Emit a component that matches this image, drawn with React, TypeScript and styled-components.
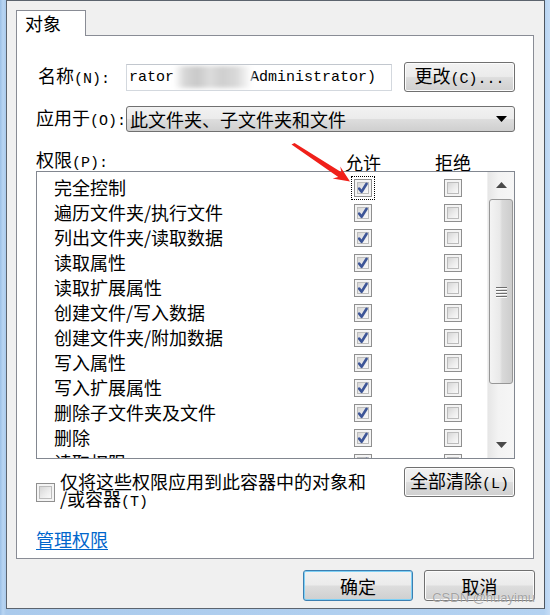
import styled, { createGlobalStyle } from "styled-components";

const GlobalStyle = createGlobalStyle`
  html, body {
    margin: 0;
    padding: 0;
  }
  body {
    background: #b0cfee;
    font-family: "Noto Sans CJK SC", sans-serif;
    color: #000;
  }
`;

const Screen = styled.div`
  position: relative;
  width: 550px;
  height: 615px;
  overflow: hidden;
  box-sizing: border-box;
  padding: 0 5px 0 6px;
  background: linear-gradient(90deg, #9cc0e6 0, #b9d5f2 3px, #aacaec 6px, #b4d2f1 544px, #c6ddf6 550px);
`;

const Window = styled.div`
  box-sizing: border-box;
  height: 609px;
  border: 1px solid #5c646e;
  border-right-color: #4e5660;
  background: #f0f0f0;
  padding: 9px 10px 0 9px;
  display: flex;
  flex-direction: column;
`;

const TabStrip = styled.div`
  display: flex;
  height: 25px;
`;

const Tab = styled.div`
  position: relative;
  z-index: 1;
  box-sizing: border-box;
  width: 70px;
  height: 26px;
  border: 1px solid #898c95;
  border-bottom: none;
  background: #fff;
  padding-left: 8px;
  font-size: 18px;
  line-height: 24px;
`;

const Panel = styled.div`
  box-sizing: border-box;
  height: 524px;
  border: 1px solid #898c95;
  background: #fff;
  padding: 0 18px 0 19px;
  display: flex;
  flex-direction: column;
  font-size: 18px;
`;

const Half = styled.span`
  font-family: "Liberation Mono", monospace;
  font-size: 15px;
`;

const FieldRow = styled.div<{ $top: number; $height: number }>`
  display: flex;
  align-items: center;
  margin-top: ${({ $top }) => $top}px;
  height: ${({ $height }) => $height}px;
`;

const Label = styled.div<{ $width: number; $indent?: number }>`
  flex: 0 0 auto;
  box-sizing: border-box;
  width: ${({ $width }) => $width}px;
  padding-left: ${({ $indent }) => $indent ?? 0}px;
  white-space: nowrap;
  line-height: 20px;
`;

const TextBox = styled.div`
  box-sizing: border-box;
  width: 266px;
  height: 27px;
  margin-right: 12px;
  border: 1px solid #d3d8de;
  border-top-color: #c2c7ce;
  padding-left: 2px;
  display: flex;
  align-items: center;
  white-space: nowrap;
  overflow: hidden;
  font-family: "Liberation Mono", monospace;
  font-size: 15px;
`;

const Blur = styled.span`
  display: inline-block;
  width: 78px;
  height: 22px;
  margin: 0 -2px 0 0;
  background: linear-gradient(90deg, #fff 0, #d6d6d6 14%, #c9c9c9 30%, #dcdcdc 46%, #cfcfcf 62%, #d9d9d9 80%, #fff 100%);
  filter: blur(2px);
`;

const WinButton = styled.button<{ $width: number; $height: number; $default?: boolean }>`
  box-sizing: border-box;
  width: ${({ $width }) => $width}px;
  height: ${({ $height }) => $height}px;
  padding: 0;
  border: 1px solid ${({ $default }) => ($default ? "#3c7fb1" : "#707070")};
  border-radius: 3px;
  background: linear-gradient(#f2f2f2 0%, #ebebeb 48%, #dddddd 52%, #cfcfcf 100%);
  box-shadow: inset 0 0 0 1px ${({ $default }) => ($default ? "#7fd0f5" : "#fcfcfc")};
  font-family: "Noto Sans CJK SC", sans-serif;
  font-size: 18px;
  line-height: 20px;
  color: #000;
  white-space: nowrap;
`;

const Combo = styled.div`
  flex: 1;
  box-sizing: border-box;
  height: 26px;
  border: 1px solid #707070;
  border-radius: 3px;
  background: linear-gradient(#f2f2f2 0%, #ebebeb 48%, #dddddd 52%, #cfcfcf 100%);
  display: flex;
  align-items: center;
  justify-content: space-between;
  padding: 0 7px 0 3px;
  line-height: 20px;
`;

const HeaderRow = styled.div`
  display: grid;
  grid-template-columns: 309px 90px auto;
  align-items: center;
  margin-top: 17px;
  height: 20px;
  margin-bottom: 2px;
  line-height: 20px;
`;

const ListBox = styled.div`
  box-sizing: border-box;
  height: 288px;
  border: 1px solid #828790;
  display: flex;
  overflow: hidden;
`;

const Rows = styled.div`
  flex: 1;
  padding-top: 3px;
  overflow: hidden;
`;

const PermRow = styled.div`
  display: grid;
  grid-template-columns: 300px 90px 18px;
  align-items: center;
  height: 25px;
  padding-left: 17px;
  line-height: 25px;
  white-space: nowrap;
`;

const Box = styled.span<{ $focus?: boolean; $size?: number }>`
  position: relative;
  box-sizing: border-box;
  display: block;
  width: ${({ $size }) => $size ?? 18}px;
  height: ${({ $size }) => $size ?? 18}px;
  border: 1px solid #8f8f8f;
  background: #f4f4f4;
  outline: ${({ $focus }) => ($focus ? "1px dotted #000" : "none")};
  outline-offset: 2px;

  &::before {
    content: "";
    position: absolute;
    inset: 2px;
    border: 1px solid #bcbcbc;
    background: linear-gradient(135deg, #d6d6d6 0%, #ececec 55%, #fafafa 100%);
  }

  svg {
    position: absolute;
    inset: 0;
  }
`;

const ScrollBar = styled.div`
  flex: 0 0 26px;
  display: flex;
  flex-direction: column;
  background: linear-gradient(90deg, #e6e6e6 0, #f3f3f3 40%, #f6f6f6 100%);
  border-left: 1px solid #f0f0f0;
`;

const ArrowCell = styled.div`
  height: 26px;
  display: flex;
  align-items: center;
  justify-content: center;
`;

const Thumb = styled.div`
  box-sizing: border-box;
  height: 185px;
  margin: 1px 1px 0 1px;
  border: 1px solid #979797;
  border-radius: 3px;
  background: linear-gradient(90deg, #f4f4f4 0%, #e9e9e9 45%, #d9d9d9 55%, #cdcdcd 100%);
  display: flex;
  flex-direction: column;
  align-items: center;
  justify-content: center;
  gap: 2px;
`;

const Grip = styled.span`
  display: block;
  width: 11px;
  height: 1px;
  background: #6e6e6e;
  box-shadow: 0 1px 0 #fdfdfd;
`;

const Spacer = styled.div`
  flex: 1;
`;

const BottomRow = styled.div`
  display: flex;
  justify-content: space-between;
  align-items: flex-start;
  margin-top: 8px;
`;

const InheritGroup = styled.div`
  display: flex;
  align-items: center;
  gap: 5px;
  margin-top: 6px;
`;

const InheritText = styled.div`
  line-height: 17px;
  white-space: nowrap;
`;

const Link = styled.a`
  align-self: flex-start;
  margin-top: 19px;
  color: #0066cc;
  text-decoration: underline;
  text-underline-offset: 2px;
  line-height: 18px;
  cursor: pointer;
`;

const Footer = styled.div`
  display: flex;
  justify-content: flex-end;
  gap: 11px;
  margin-top: 11px;
  margin-right: -1px;
`;

const Watermark = styled.div`
  position: absolute;
  right: 15px;
  top: 590px;
  white-space: nowrap;
  font-family: "Liberation Sans", sans-serif;
  font-size: 13px;
  color: rgba(96, 96, 96, 0.55);
  text-shadow: 0 0 1px rgba(255, 255, 255, 0.8);
  pointer-events: none;
`;

const Overlay = styled.svg`
  position: absolute;
  left: 0;
  top: 0;
  pointer-events: none;
`;

const perms = [
  "完全控制",
  "遍历文件夹/执行文件",
  "列出文件夹/读取数据",
  "读取属性",
  "读取扩展属性",
  "创建文件/写入数据",
  "创建文件夹/附加数据",
  "写入属性",
  "写入扩展属性",
  "删除子文件夹及文件",
  "删除",
  "读取权限",
];

const Checkbox = ({ checked, focus, size }: { checked?: boolean; focus?: boolean; size?: number }) => (
  <Box $focus={focus} $size={size}>
    {checked && (
      <svg width="16" height="16" viewBox="0 0 16 16">
        <path d="M4.2 8.6 L6.6 11.8 L11.6 3.8" fill="none" stroke="#3d5597" strokeWidth="2.6" strokeLinejoin="round" strokeLinecap="round" />
      </svg>
    )}
  </Box>
);

const Tri = ({ up }: { up?: boolean }) => (
  <svg width="11" height="6" viewBox="0 0 11 6">
    <polygon points={up ? "5.5,0 11,6 0,6" : "0,0 11,0 5.5,6"} fill="#4a4a4a" />
  </svg>
);

export default function App() {
  return (
    <>
      <GlobalStyle />
      <Screen>
        <Window>
          <TabStrip>
            <Tab>对象</Tab>
          </TabStrip>
          <Panel>
            <FieldRow $top={26} $height={30}>
              <Label $width={90} $indent={2}>
                名称<Half>(N):</Half>
              </Label>
              <TextBox>
                rator <Blur />Administrator)
              </TextBox>
              <WinButton $width={111} $height={30}>
                更改<Half>(C)...</Half>
              </WinButton>
            </FieldRow>

            <FieldRow $top={14} $height={26}>
              <Label $width={90}>
                应用于<Half>(O):</Half>
              </Label>
              <Combo>
                <span>此文件夹、子文件夹和文件</span>
                <svg width="11" height="6" viewBox="0 0 11 6">
                  <polygon points="0,0 11,0 5.5,6" fill="#000" />
                </svg>
              </Combo>
            </FieldRow>

            <HeaderRow>
              <span>
                权限<Half>(P):</Half>
              </span>
              <span>允许</span>
              <span>拒绝</span>
            </HeaderRow>

            <ListBox>
              <Rows>
                {perms.map((name, i) => (
                  <PermRow key={name}>
                    <span>{name}</span>
                    <Checkbox checked focus={i === 0} />
                    <Checkbox />
                  </PermRow>
                ))}
              </Rows>
              <ScrollBar>
                <ArrowCell>
                  <Tri up />
                </ArrowCell>
                <Thumb>
                  <Grip />
                  <Grip />
                  <Grip />
                  <Grip />
                </Thumb>
                <Spacer />
                <ArrowCell>
                  <Tri />
                </ArrowCell>
              </ScrollBar>
            </ListBox>

            <BottomRow>
              <InheritGroup>
                <Checkbox size={19} />
                <InheritText>
                  仅将这些权限应用到此容器中的对象和
                  <br />
                  /或容器<Half>(T)</Half>
                </InheritText>
              </InheritGroup>
              <WinButton $width={111} $height={30}>
                全部清除<Half>(L)</Half>
              </WinButton>
            </BottomRow>

            <Link>管理权限</Link>
          </Panel>

          <Footer>
            <WinButton $width={110} $height={31} $default>
              确定
            </WinButton>
            <WinButton $width={111} $height={31}>
              取消
            </WinButton>
          </Footer>
        </Window>

        <Overlay width="550" height="615" viewBox="0 0 550 615">
          <polygon
            points="291.5,144.5 294.5,143 341.4,172.2 340.2,166.4 350,181.5 332.6,178.4 338.2,177"
            fill="#f0201a"
          />
        </Overlay>
        <Watermark>CSDN @huayimu</Watermark>
      </Screen>
    </>
  );
}
